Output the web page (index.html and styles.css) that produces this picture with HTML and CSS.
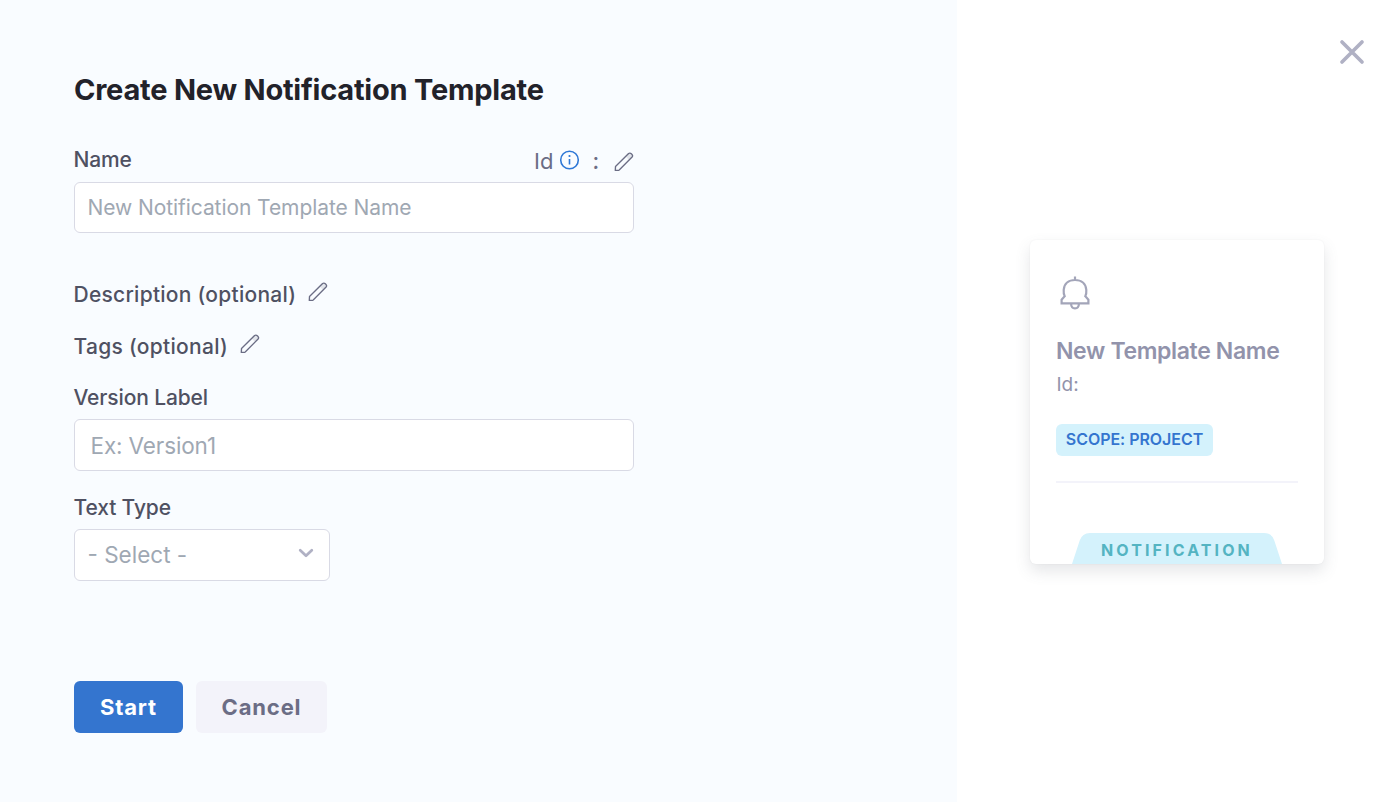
FILE: index.html
```html
<!DOCTYPE html>
<html lang="en">
<head>
<meta charset="utf-8">
<title>Create New Notification Template</title>
<link rel="stylesheet" href="styles.css">
</head>
<body>
<svg class="defs" width="0" height="0">
  <symbol id="pencil" viewBox="0 0 20 20">
    <path d="M1.3 18.4L1.5 14.6L14.6 1.5Q16 .5 17.6 1.9Q19.3 3.4 18.1 5L5.2 17.9Q4.5 18.5 3.7 18.4Z" fill="none" stroke="currentColor" stroke-width="1.35" stroke-linejoin="round"/>
    <path d="M11.7 4.5L14.6 1.6Q16 .6 17.6 2Q19.2 3.4 18.1 5L15.2 7.9Z" fill="currentColor" opacity=".16"/>
  </symbol>
</svg>
<main class="dialog">
  <form class="form">
    <h1 class="title">Create New Notification Template</h1>
    <div class="name-row">
      <label class="label label-name" for="name">Name</label>
      <div class="id-group">
        <span class="id-text">Id</span>
        <svg class="info" viewBox="0 0 20 20"><circle cx="10" cy="10" r="8.8" fill="none" stroke="currentColor" stroke-width="1.6"/><path d="M10 9V14.4" stroke="currentColor" stroke-width="1.6"/><circle cx="10" cy="6" r="1.1" fill="currentColor"/></svg>
        <span class="colon">:</span>
        <svg class="pencil"><use href="#pencil"/></svg>
      </div>
    </div>
    <input class="input input-name" id="name" placeholder="New Notification Template Name">
    <div class="optional description"><span class="label label-description">Description (optional)</span><svg class="pencil"><use href="#pencil"/></svg></div>
    <div class="optional tags"><span class="label label-tags">Tags (optional)</span><svg class="pencil"><use href="#pencil"/></svg></div>
    <label class="label label-version" for="version">Version Label</label>
    <input class="input input-version" id="version" placeholder="Ex: Version1">
    <span class="label label-type">Text Type</span>
    <div class="select"><span>- Select -</span><svg class="chevron" viewBox="0 0 16 10"><path d="M2.2 2.2L8 7.8L13.8 2.2" fill="none" stroke="currentColor" stroke-width="2.7" stroke-linecap="round" stroke-linejoin="round"/></svg></div>
    <div class="actions">
      <button class="button start" type="button">Start</button>
      <button class="button cancel" type="button">Cancel</button>
    </div>
  </form>
  <aside class="preview">
    <svg class="close" viewBox="0 0 26 26"><path d="M3 3L23 23M23 3L3 23" stroke="currentColor" stroke-width="3.7" stroke-linecap="round"/></svg>
    <section class="card">
      <svg class="bell" viewBox="0 0 32 34"><path d="M16 .5V4M5.7 20.2C4.7 18.5 4.5 16.4 4.7 13.8C5.2 7.7 9.6 4 16 4S26.8 7.7 27.3 13.8C27.5 16.4 27.3 18.5 26.3 20.2L29.4 23.7V27.4H2.6V23.7ZM12.1 28C12.2 30.9 13.7 32.4 16 32.4S19.8 30.9 19.9 28" fill="none" stroke="currentColor" stroke-width="2.2"/></svg>
      <h2 class="card-name">New Template Name</h2>
      <p class="card-id">Id:</p>
      <span class="scope">SCOPE: PROJECT</span>
      <hr class="divider">
      <div class="ribbon">
        <svg class="ribbon-shape" viewBox="0 0 210 31"><path d="M0 31L7.7 7.6Q10.2 0 18 0H192Q199.8 0 202.3 7.6L210 31Z" fill="currentColor"/></svg>
        <span class="ribbon-text">NOTIFICATION</span>
      </div>
    </section>
  </aside>
</main>
</body>
</html>
```

FILE: styles.css
```css
* { box-sizing: border-box; }
body { margin: 0; font-family: Inter, "Liberation Sans", sans-serif; background: #fff; }
.defs { position: absolute; }
.dialog { display: grid; grid-template-columns: 957px 1fr; height: 802px; overflow: hidden; }
.form { display: flex; flex-direction: column; align-items: flex-start; padding: 70px 0 0 74px; background: #f9fcff; }
.title { margin: 0; font-size: 29px; font-weight: 650; line-height: 40px; letter-spacing: -.22px; color: #22222a; white-space: nowrap; }
.label { margin-left: -.5px; font-size: 21px; font-weight: 540; line-height: 26px; letter-spacing: -.13px; color: #4f5162; white-space: nowrap; }
.label-description { letter-spacing: .26px; }
.label-tags { letter-spacing: .29px; }
.name-row { display: flex; justify-content: space-between; width: 560px; height: 26px; margin-top: 37px; }
.id-group { display: flex; color: #6b6d85; font-size: 22px; line-height: 28px; }
.info { width: 20px; height: 20px; margin: 3px 13px 0 6px; color: #2f78d6; }
.colon { width: 21px; font-weight: 500; }
.pencil { width: 20px; height: 20px; color: #6b6d85; }
.id-group .pencil { margin-top: 5px; }
.id-group .info, .id-group .colon, .id-text { transform: translateX(-.5px); }
.input { width: 560px; border: 1px solid #d9dae5; border-radius: 6px; background: #fff; font-family: inherit; font-weight: 400; outline: none; }
.input::placeholder { color: #9fa8b3; opacity: 1; }
.input-name { height: 51px; margin-top: 9px; padding: 0 12.5px; font-size: 21px; letter-spacing: -.075px; }
.input-version { height: 52px; margin-top: 8px; padding: 0 15.5px; font-size: 22.5px; letter-spacing: -.13px; }
.optional { display: flex; gap: 12px; height: 26px; }
.description { margin-top: 49px; }
.tags { margin-top: 26px; }
.label-version { margin-top: 25px; }
.label-type { margin-top: 24px; }
.select { display: flex; align-items: center; justify-content: space-between; width: 256px; height: 52px; margin-top: 8px; padding: 0 15px 2px 12.5px; border: 1px solid #d9dae5; border-radius: 6px; background: #fff; color: #9fa8b3; font-size: 22.5px; }
.chevron { width: 16px; height: 10px; margin-bottom: 2px; color: #b0b1c4; }
.actions { display: flex; gap: 13px; margin-top: 100px; }
.button { height: 52px; padding: 0; border: 0; border-radius: 6px; font-family: inherit; font-size: 22px; font-weight: 680; letter-spacing: .85px; }
.start { width: 109px; background: #3475cf; color: #fff; }
.cancel { width: 131px; background: #f3f3fa; color: #6b6d85; }
.preview { display: flex; flex-direction: column; padding: 39px 31px 0 73px; background: #fff; }
.close { align-self: flex-end; width: 26px; height: 26px; color: #b0b1c4; }
.card { display: flex; flex-direction: column; align-items: flex-start; width: 294px; height: 324px; margin-top: 175px; padding: 36px 26px 0; border-radius: 6px; background: #fff; box-shadow: 0 0 2px rgba(40,41,61,.05), 0 7px 15px rgba(96,97,112,.16); }
.bell { width: 32px; height: 34px; margin-left: 3px; color: #a3a5b9; }
.card-name { margin: 25px 0 0; font-size: 23px; font-weight: 560; line-height: 32px; letter-spacing: -.35px; color: #9293ab; white-space: nowrap; }
.card-id { margin: 6px 0 0 .5px; font-size: 19px; line-height: 24px; color: #9293ab; }
.scope { width: 157px; height: 32px; margin-top: 27px; border-radius: 6px; background: #d4f2fc; color: #3475cf; font-size: 16px; font-weight: 640; line-height: 31px; letter-spacing: -.05px; text-align: center; white-space: nowrap; }
.divider { width: 242px; height: 2px; margin: 25px 0 0; border: 0; background: #f3f3fa; }
.ribbon { display: grid; width: 210px; height: 31px; margin: 50px 0 0 16px; }
.ribbon > * { grid-area: 1 / 1; }
.ribbon-shape { width: 210px; height: 31px; color: #d4f2fc; }
.ribbon-text { z-index: 1; padding-left: 29px; color: #54b4c2; font-size: 16px; font-weight: 650; line-height: 34px; letter-spacing: 3.1px; white-space: nowrap; }
```
